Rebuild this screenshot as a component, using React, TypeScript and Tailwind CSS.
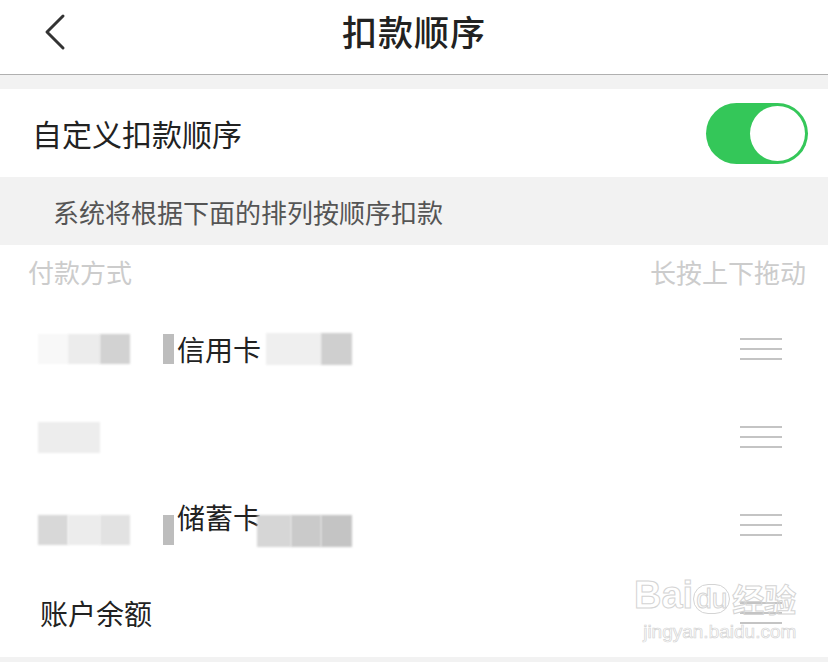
const DragHandle = () => (
  <div className="flex flex-col gap-[8px] w-[42px]">
    <div className="h-[2px] bg-[#c4c4c4]" />
    <div className="h-[2px] bg-[#c4c4c4]" />
    <div className="h-[2px] bg-[#c4c4c4]" />
  </div>
);

const Blur = ({ w, h, c }: { w: number; h: number; c: string }) => (
  <div className={`${c} blur-[1px]`} style={{ width: w, height: h }} />
);

export default function App() {
  const font = { fontFamily: '"Noto Sans CJK SC", "Noto Sans", sans-serif' };

  return (
    <div className="w-[828px] h-[662px] bg-[#f2f2f2] overflow-hidden relative" style={font}>
      {/* header */}
      <div className="h-[75px] bg-white border-b border-[#b0b0b0] flex items-center justify-center relative">
        <svg className="absolute left-[40px] top-[12px]" width="30" height="40" viewBox="0 0 30 40" fill="none">
          <path d="M23 4 L7 20 L23 36" stroke="#333" strokeWidth="3" strokeLinecap="round" strokeLinejoin="round" />
        </svg>
        <span className="text-[35px] font-medium text-[#222] tracking-[1px] -mt-[12px]">扣款顺序</span>
      </div>
      <div className="h-[14px]" />

      {/* toggle row */}
      <div className="h-[88px] bg-white flex items-center justify-between pl-[32px] pr-[20px]">
        <span className="text-[30px] text-[#222]">自定义扣款顺序</span>
        <div className="w-[102px] h-[61px] rounded-full bg-[#34c759] flex items-center justify-end pr-[3px]">
          <div className="w-[55px] h-[55px] rounded-full bg-white" />
        </div>
      </div>

      {/* note */}
      <div className="h-[68px] flex items-center pl-[53px]">
        <span className="text-[26px] text-[#555]">系统将根据下面的排列按顺序扣款</span>
      </div>

      {/* list */}
      <div className="bg-white">
        <div className="h-[60px] flex items-center justify-between pl-[28px] pr-[22px] pb-[8px]">
          <span className="text-[26px] text-[#cccccc]">付款方式</span>
          <span className="text-[26px] text-[#cccccc]">长按上下拖动</span>
        </div>

        <div className="h-[88px] flex items-center justify-between pl-[38px] pr-[46px]">
          <div className="flex items-center">
            <div className="flex">
              <Blur w={30} h={30} c="bg-[#f8f8f8]" />
              <Blur w={32} h={30} c="bg-[#ececec]" />
              <Blur w={30} h={30} c="bg-[#d2d2d2]" />
            </div>
            <div className="w-[11px] h-[30px] bg-[#bdbdbd] ml-[33px]" />
            <span className="text-[28px] text-[#222] ml-[3px]">信用卡</span>
            <div className="flex ml-[5px]">
              <Blur w={55} h={32} c="bg-[#efefef]" />
              <Blur w={31} h={32} c="bg-[#cfcfcf]" />
            </div>
          </div>
          <DragHandle />
        </div>

        <div className="h-[88px] flex items-center justify-between pl-[38px] pr-[46px]">
          <Blur w={62} h={31} c="bg-[#ededed]" />
          <DragHandle />
        </div>

        <div className="h-[88px] flex items-center justify-between pl-[38px] pr-[46px]">
          <div className="flex items-center">
            <div className="flex mt-[10px]">
              <Blur w={30} h={30} c="bg-[#d8d8d8]" />
              <Blur w={32} h={30} c="bg-[#ececec]" />
              <Blur w={30} h={30} c="bg-[#e2e2e2]" />
            </div>
            <div className="w-[11px] h-[30px] bg-[#bdbdbd] ml-[33px] mt-[10px]" />
            <span className="text-[28px] text-[#222] ml-[3px] -mt-[16px]">储蓄卡</span>
            <div className="flex mt-[12px] -ml-[4px]">
              <Blur w={34} h={32} c="bg-[#d6d6d6]" />
              <Blur w={30} h={32} c="bg-[#cacaca]" />
              <Blur w={31} h={32} c="bg-[#c4c4c4]" />
            </div>
          </div>
          <DragHandle />
        </div>

        <div className="h-[88px] flex items-center justify-between pl-[40px] pr-[46px]">
          <span className="text-[28px] text-[#222]">账户余额</span>
          <DragHandle />
        </div>
      </div>

      {/* watermark */}
      <div className="absolute left-[634px] top-[576px] flex flex-col items-end pointer-events-none">
        <div className="flex items-end leading-none">
          <span className="text-[38px] font-bold text-transparent [-webkit-text-stroke:1px_#d4d4d4]" style={{ fontFamily: '"Liberation Sans", sans-serif' }}>Bai</span>
          <span className="text-[28px] text-transparent [-webkit-text-stroke:1px_#d4d4d4] border border-[#d4d4d4] rounded-full px-[2px]" style={{ fontFamily: '"Liberation Sans", sans-serif' }}>du</span>
          <span className="text-[32px] font-bold text-transparent [-webkit-text-stroke:1px_#d4d4d4] ml-[2px]">经验</span>
        </div>
        <span className="text-[19px] text-transparent [-webkit-text-stroke:0.7px_#d4d4d4] leading-none mt-[8px]" style={{ fontFamily: '"Liberation Sans", sans-serif' }}>jingyan.baidu.com</span>
      </div>
    </div>
  );
}
